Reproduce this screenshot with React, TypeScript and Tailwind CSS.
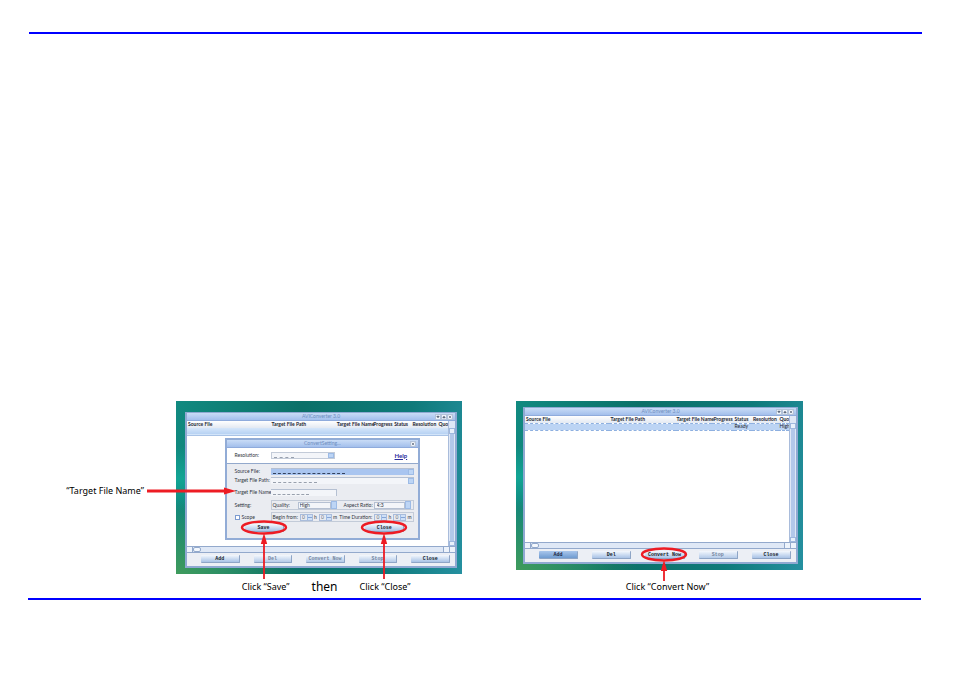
import React from 'react';

interface MarkerProps {
  drop: string;
}

// Red ring around a button with an arrow rising to it from the caption
const Marker: React.FC<MarkerProps> = ({ drop }) => (
  <span className="pointer-events-none absolute inset-0 flex items-center justify-center">
    <svg className="absolute h-[14px] w-[46px] overflow-visible" viewBox="0 0 46 14">
      <ellipse cx="23" cy="6.5" rx="22" ry="6" fill="none" stroke="#ed1c24" strokeWidth="2.4" />
    </svg>
    <svg className={`absolute top-full left-1/2 -ml-1 mt-[2px] w-2 ${drop}`} viewBox="0 0 8 46" preserveAspectRatio="xMidYMin slice">
      <path d="M4 0 L7.2 11 H4.9 V46 H3.1 V11 H0.8 Z" fill="#ed1c24" />
    </svg>
  </span>
);

interface PushButtonProps {
  label: string;
  tone?: 'normal' | 'muted' | 'active';
  marker?: React.ReactNode;
}

const PushButton: React.FC<PushButtonProps> = ({ label, tone = 'normal', marker }) => (
  <button
    type="button"
    className={`relative flex h-[8px] w-full items-center justify-center rounded-[1px] border-r border-b border-[#8ea5c6] text-[5px] leading-none font-bold whitespace-nowrap ${
      tone === 'active'
        ? 'bg-linear-to-b from-[#a9c6ec] to-[#6f9bd0] text-[#16233c]'
        : tone === 'muted'
          ? 'bg-linear-to-b from-[#f4f8fd] to-[#b4cae8] text-[#75869f]'
          : 'bg-linear-to-b from-[#f4f8fd] to-[#a9c3e6] text-[#141c2a]'
    }`}
  >
    <span className="pt-[1px] font-['Liberation_Mono',monospace]">{label}</span>
    {marker}
  </button>
);

const GLYPHS: Record<string, string> = {
  Minimize: 'M1.5 2 H4.5 L3 4 Z',
  Maximize: 'M1.5 4 H4.5 L3 2 Z',
  Close: 'M1.5 1.5 L4.5 4.5 M4.5 1.5 L1.5 4.5',
};

const TitleBar: React.FC<{ title: string; controls?: string[] }> = ({ title, controls = ['Minimize', 'Maximize', 'Close'] }) => (
  <div className="relative flex h-[8px] shrink-0 items-center justify-center border-b border-[#8fabdc] bg-linear-to-b from-[#c9dcf6] to-[#a3bfec]">
    <span className="text-[5px] leading-none text-[#6d8dc0]">{title}</span>
    <div className="absolute right-[2px] flex">
      {controls.map((c) => (
        <button key={c} type="button" aria-label={c} className="h-[6px] w-[6px] border border-[#b3c3da] bg-[#eef3fa]">
          <svg className="h-full w-full overflow-visible" viewBox="0.5 0.5 5 5">
            <path d={GLYPHS[c]} fill="#4a566c" stroke="#4a566c" strokeWidth="0.8" />
          </svg>
        </button>
      ))}
    </div>
  </div>
);

interface ConverterProps {
  title: string;
  ready?: boolean;
  children?: React.ReactNode;
}

const COLUMNS = ['Source File', 'Target File Path', 'Target File Name', 'Progress', 'Status', 'Resolution', 'Quo'];

const ConverterWindow: React.FC<ConverterProps> = ({ title, ready, children }) => (
  <div className="relative flex h-full flex-col border-2 border-t border-[#8fa9d2] bg-white font-['Lato','Liberation_Sans',sans-serif]">
    <TitleBar title={title} />
    <div className="flex min-h-0 flex-1">
      <div className="min-w-0 flex-1 overflow-hidden">
        <table className="w-full table-fixed border-collapse text-[5px] leading-none whitespace-nowrap">
          <colgroup>
            <col className="w-[32%]" />
            <col className="w-[25%]" />
            <col className="w-[14%]" />
            <col className="w-[8%]" />
            <col className="w-[7%]" />
            <col className="w-[10%]" />
            <col className="w-[4%]" />
          </colgroup>
          <thead>
            <tr className="h-[7px] bg-linear-to-b from-white to-[#e3e9f2] text-left text-[#1c2430]">
              {COLUMNS.map((c) => (
                <th key={c} className="p-0 pl-[1px] font-bold">{c}</th>
              ))}
            </tr>
          </thead>
          <tbody>
            <tr
              className={
                ready
                  ? 'h-[7px] border-y border-dashed border-[#8eb0e0] bg-[#bcd4f4] text-[#1c2430]'
                  : 'h-[7px] border-b border-[#a9c3e6] bg-linear-to-b from-[#d5e6fa] to-[#b7d2f3]'
              }
            >
              {COLUMNS.map((c) => (
                <td key={c} className="overflow-hidden p-0 pl-[1px]">
                  {ready && c === 'Status' ? 'Ready' : ready && c === 'Quo' ? 'High' : ''}
                </td>
              ))}
            </tr>
          </tbody>
        </table>
      </div>
      <div className="flex w-[7px] flex-col items-center border-l border-[#a9bcdb] bg-[#dfe8f6]">
        <div className="mt-[7px] h-[6px] w-full border border-[#9fb8de] bg-[#e9f1fb]" />
        <div className="w-[4px] flex-1 bg-[#b3c8ea]" />
        <div className="h-[5px] w-full border border-[#9fb8de] bg-[#e9f1fb]" />
      </div>
    </div>
    <div className="flex h-[7px] items-stretch border-y border-[#93a9cc] bg-[#dfe8f6]">
      <div className="w-[6px] border-r border-[#93a9cc] bg-[#edf3fb]" />
      <div className="w-[8px] rounded-[2px] border border-[#93a9cc] bg-[#f4f8fd]" />
      <div className="flex-1" />
      <div className="w-[6px] border-l border-[#93a9cc] bg-[#edf3fb]" />
      <div className="w-[6px] border-l border-[#93a9cc] bg-[#edf3fb]" />
    </div>
    <div className="grid h-[13px] grid-cols-5 gap-[14px] bg-[#eceff5] pt-[2px] pr-[5px] pl-[14px]">
      <PushButton label="Add" tone={ready ? 'active' : 'normal'} />
      <PushButton label="Del" tone={ready ? 'normal' : 'muted'} />
      <PushButton label="Convert Now" tone={ready ? 'normal' : 'muted'} marker={ready && <Marker drop="h-[21px]" />} />
      <PushButton label="Stop" tone="muted" />
      <PushButton label="Close" />
    </div>
    {children}
  </div>
);

const DropMark = () => <span className="h-full w-[6px] shrink-0 border border-[#9dbbe6] bg-[#bdd5f5]" />;

interface FieldProps {
  id: string;
  label: string;
  width: string;
  selected?: boolean;
  drop?: boolean;
  trace?: string;
}

const Field: React.FC<FieldProps> = ({ id, label, width, selected, drop = true, trace = 'w-[44px]' }) => (
  <div className="flex h-[9px] items-center">
    <label htmlFor={id} className="w-[36px] shrink-0">{label}</label>
    <div className={`relative flex h-[7px] items-center border-t border-[#b5c0d2] ${width} ${selected ? 'bg-[#a9c5f0]' : 'bg-[#f3f5f9]'} ${drop ? '' : 'border-r'}`}>
      <input id={id} className="h-full w-full min-w-0 bg-transparent outline-none" />
      <span className={`absolute bottom-[1px] left-[2px] border-b border-dashed ${selected ? 'border-[#33415c]' : 'border-[#98a0ad]'} ${trace}`} />
      {drop && <DropMark />}
    </div>
  </div>
);

const Spin: React.FC<{ name: string; unit: string }> = ({ name, unit }) => (
  <span className="flex items-center gap-[1px]">
    <span className="flex h-[7px] w-[13px] border border-[#a9bcdb] bg-[#e6e9ef]">
      <input aria-label={name} defaultValue="0" className="w-[6px] min-w-0 pl-[1px] text-[#6a7482] outline-none" />
      <span className="flex flex-1 flex-col justify-center border-l border-[#9dbbe6] bg-[#cfe0f7]">
        <span className="border-b border-[#86a5d5]" />
      </span>
    </span>
    {unit}
  </span>
);

const SettingsDialog = () => (
  <div className="absolute top-[25px] right-[13%] left-[14%] flex h-[102px] flex-col border-2 border-[#92acd6] bg-[#eaecf1] text-[5px] leading-none whitespace-nowrap text-[#30353e]">
    <TitleBar title="ConvertSetting..." controls={['Close']} />
    <div className="flex h-[15px] shrink-0 items-center bg-white pl-[8px]">
      <label htmlFor="resolution" className="w-[36px]">Resolution:</label>
      <div className="relative flex h-[7px] w-[64px] border border-[#c3cbd8] bg-[#f3f5f9]">
        <select id="resolution" className="w-full appearance-none outline-none" />
        <span className="absolute bottom-0 left-[2px] w-[20px] border-b border-dashed border-[#98a0ad]" />
        <DropMark />
      </div>
      <a href="#help" className="mr-[11px] ml-auto text-[6px] font-bold text-[#2b2b9c] underline">Help</a>
    </div>
    <div className="flex-1 border-t border-[#93a9cc] pt-[3px] pl-[8px]">
      <Field id="source" label="Source File:" width="w-[143px]" selected trace="w-[72px]" />
      <Field id="path" label="Target File Path:" width="w-[143px]" />
      <div className="pt-[3px]">
        <Field id="name" label="Target File Name:" width="w-[66px]" drop={false} trace="w-[36px]" />
      </div>
      <div className="mt-[3px] flex h-[10px] items-center">
        <span className="w-[36px]">Setting:</span>
        <div className="flex h-full w-[143px] items-center border border-[#c3cbd8] px-[1px]">
          <label htmlFor="quality" className="w-[25px]">Quality:</label>
          <select id="quality" className="h-[7px] w-[33px] appearance-none border border-[#b5c0d2] bg-[#f3f5f9] pl-[1px]">
            <option>High</option>
          </select>
          <DropMark />
          <label htmlFor="ratio" className="ml-[7px] w-[30px]">Aspect Ratio:</label>
          <select id="ratio" className="h-[7px] w-[31px] appearance-none border border-[#b5c0d2] bg-[#f3f5f9] pl-[2px]">
            <option>4:3</option>
          </select>
          <DropMark />
        </div>
      </div>
      <div className="mt-[2px] flex h-[10px] items-center">
        <label className="flex w-[36px] items-center gap-[2px]">
          <input type="checkbox" className="h-[5px] w-[5px] appearance-none border border-[#7c9bd0] bg-white" />
          Scope
        </label>
        <div className="flex h-full w-[143px] items-center justify-between border border-[#c3cbd8] px-[1px]">
          <span>Begin from:</span>
          <Spin name="Begin hours" unit="h" />
          <Spin name="Begin minutes" unit="m" />
          <span>Time Duration:</span>
          <Spin name="Duration hours" unit="h" />
          <Spin name="Duration minutes" unit="m" />
        </div>
      </div>
      <div className="mt-[2px] flex justify-between pr-[14px] pl-[10px]">
        <div className="w-[39px]">
          <PushButton label="Save" marker={<Marker drop="h-[46px]" />} />
        </div>
        <div className="w-[39px]">
          <PushButton label="Close" marker={<Marker drop="h-[46px]" />} />
        </div>
      </div>
    </div>
  </div>
);

const DESKTOP =
  'bg-[radial-gradient(ellipse_at_0%_100%,#3f9b5c_0%,transparent_30%),radial-gradient(ellipse_at_0%_45%,#12a595_0%,transparent_24%),linear-gradient(100deg,#118a80_0%,#0b7068_40%,#0f7a7a_75%,#2590a0_100%)]';

export default function App() {
  return (
    <main className="bg-white pt-8 pr-8 pl-7 font-['Noto_Sans','Open_Sans',sans-serif] text-[9px] leading-[12px] text-black">
      <hr className="ml-px h-[2px] border-0 bg-[#0000ff]" />
      <section className="mt-[367px] grid grid-cols-[148fr_286fr_54fr_287fr_119fr]">
        <div className="relative pt-[84px] pr-[32px] text-right whitespace-nowrap">
          “Target File Name”
          <svg className="absolute top-[86px] left-[119px] z-10 h-[8px] w-[89px]" viewBox="0 0 89 8">
            <path d="M0 2.5 H77 V0.5 L89 4 L77 7.5 V5.5 H0 Z" fill="#ed1c24" />
          </svg>
        </div>

        <figure>
          <div className={`h-[173px] pt-[11px] pr-[5px] pb-[6px] pl-[9px] ${DESKTOP}`}>
            <ConverterWindow title="AVIConverter 3.0">
              <SettingsDialog />
            </ConverterWindow>
          </div>
          <figcaption className="flex h-[24px] items-center justify-between pt-[1px] pr-[18%] pl-[23%]">
            <span>Click “Save”</span>
            <span className="text-[12px]">then</span>
            <span>Click “Close”</span>
          </figcaption>
        </figure>

        <div />

        <figure>
          <div className={`h-[169px] pt-[6px] pr-[5px] pb-[6px] pl-[7px] ${DESKTOP}`}>
            <ConverterWindow title="AVIConverter 3.0" ready />
          </div>
          <figcaption className="flex h-[28px] items-center justify-center pt-[5px] pl-[16px]">Click “Convert Now”</figcaption>
        </figure>
      </section>
      <hr className="mr-px h-[2px] border-0 bg-[#0000ff]" />
    </main>
  );
}
